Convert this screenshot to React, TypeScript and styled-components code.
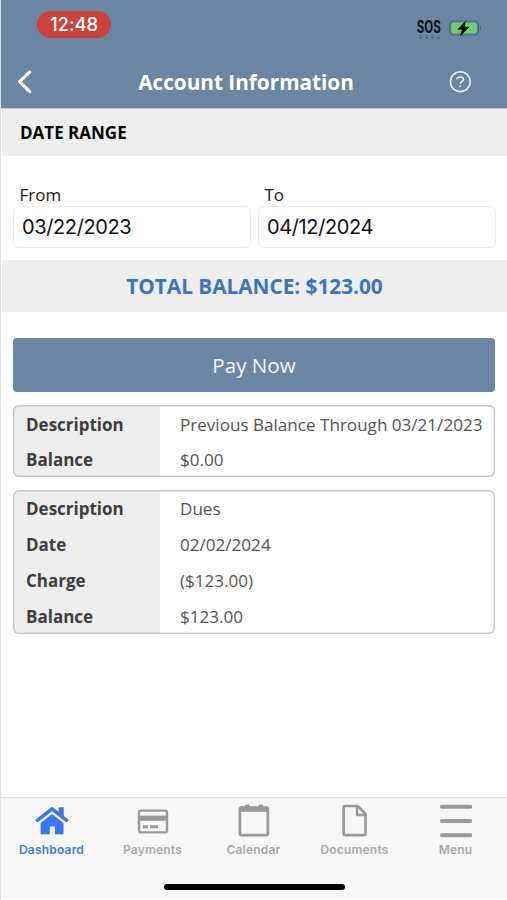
import React from "react";
import styled, { createGlobalStyle } from "styled-components";

const GlobalStyle = createGlobalStyle`
  * { box-sizing: border-box; }
  body { margin: 0; background: #fff; }
`;

const sans = `"Open Sans", "Noto Sans", sans-serif`;
const system = `Inter, "Liberation Sans", sans-serif`;

const Screen = styled.div`
  width: 507px;
  height: 900px;
  display: flex;
  flex-direction: column;
  overflow: hidden;
  background: #fff;
  font-family: ${sans};
  border-left: 1px solid #dfe4ea;
  white-space: nowrap;
`;

const Header = styled.header`
  height: 109px;
  flex: none;
  background: #6b86a2;
  border-bottom: 1px solid #c3cad2;
`;

const StatusBar = styled.div`
  height: 55px;
  display: flex;
  justify-content: space-between;
  padding: 11px 25px 0 36px;
`;

const Clock = styled.div`
  width: 74px;
  height: 27px;
  border-radius: 14px;
  background: #cb4238;
  color: #fff;
  font: 500 18.5px/27px ${system};
  letter-spacing: -0.1px;
  text-align: center;
`;

const Indicators = styled.div`
  display: flex;
  gap: 7px;
  padding-top: 8px;
`;

const Sos = styled.div`
  width: 24px;
  display: flex;
  flex-direction: column;
  align-items: center;
`;

const SosText = styled.span`
  font: 700 17px/17px ${system};
  color: #0b1016;
  transform: scaleX(0.68);
`;

const SignalDots = styled.div`
  display: flex;
  gap: 3px;
`;

const Dot = styled.i`
  width: 3px;
  height: 3px;
  border-radius: 50%;
  background: #536a82;
`;

const NavBar = styled.div`
  height: 53px;
  display: grid;
  grid-template-columns: 60px 1fr 60px;
  align-items: center;
  padding: 0 16px 0 15px;
`;

const NavButton = styled.button<{ $end?: boolean }>`
  display: flex;
  justify-content: ${(p) => (p.$end ? "flex-end" : "flex-start")};
  border: 0;
  padding: ${(p) => (p.$end ? "0 20px 0 0" : "0")};
  background: none;
`;

const Title = styled.h1`
  margin: 0;
  padding-right: 15px;
  color: #fff;
  text-align: center;
  font-size: 20.75px;
  line-height: 30px;
  font-weight: 700;
`;

const SectionTitle = styled.h2`
  flex: none;
  height: 47px;
  margin: 0 0 0 1px;
  padding-left: 18px;
  background: #eee;
  color: #080808;
  font-size: 17px;
  line-height: 47px;
  font-weight: 700;
`;

const DateRow = styled.div`
  flex: none;
  height: 103.5px;
  display: grid;
  grid-template-columns: 238px 238px;
  column-gap: 7px;
  padding: 27px 0 0 12px;
`;

const Field = styled.label`
  display: block;
`;

const FieldLabel = styled.span`
  display: block;
  padding-left: 6.5px;
  color: #222;
  font-size: 17px;
  line-height: 23px;
`;

const FieldValue = styled.span`
  display: block;
  height: 42px;
  padding-left: 8px;
  border: 1px solid #ececec;
  border-radius: 6px;
  color: #111;
  font: 400 20px/41px ${system};
  letter-spacing: -0.38px;
`;

const TotalBalance = styled.div`
  flex: none;
  height: 52.5px;
  margin-left: 1px;
  background: #eee;
  color: #3a74c9;
  text-align: center;
  font-size: 20.75px;
  line-height: 53px;
  font-weight: 700;
`;

const Content = styled.main`
  flex: 1;
  padding: 26px 12px 0;
  display: flex;
  flex-direction: column;
`;

const PayButton = styled.button`
  flex: none;
  height: 54px;
  margin-bottom: 13px;
  border: 0;
  border-radius: 4px;
  padding: 0;
  background: #6b86a2;
  color: #f6f9fc;
  font: 400 20.6px/55px ${sans};
`;

const Card = styled.dl`
  flex: none;
  margin: 0 0 12.4px;
  padding: 0.6px 0 0.2px;
  border-radius: 6px;
  overflow: hidden;
  background: linear-gradient(to right, #eee 147px, #fff 147px);
  box-shadow: inset 0 0 0 1.4px #c6c6c6;
`;

const CardRow = styled.div`
  height: 35.8px;
  display: grid;
  grid-template-columns: 167px 1fr;
  line-height: 37px;
`;

const Term = styled.dt`
  padding-left: 13px;
  color: #3d3d3d;
  font-size: 17px;
  font-weight: 700;
`;

const Detail = styled.dd`
  margin: 0;
  color: #555;
  font-size: 17.08px;
`;

const BottomBar = styled.footer`
  flex: none;
  height: 103px;
  border-top: 1px solid #dedede;
  border-bottom: 1px solid #fff;
  background: #f7f7f7;
`;

const Tabs = styled.nav`
  height: 86px;
  display: grid;
  grid-template-columns: repeat(5, 101px);
`;

const Tab = styled.a<{ $active?: boolean }>`
  display: flex;
  flex-direction: column;
  align-items: center;
  padding-top: 5px;
  color: ${(p) => (p.$active ? "#3478f6" : "#999")};
`;

const TabLabel = styled.span<{ $active?: boolean }>`
  margin-top: 3px;
  color: ${(p) => (p.$active ? "#3f7df0" : "#a9a9a9")};
  font: 600 12px/16px ${system};
  letter-spacing: 0.2px;
`;

const HomeIndicator = styled.div`
  width: 181px;
  height: 6px;
  margin-left: 162.5px;
  border-radius: 3px;
  background: #000;
`;

const Battery = () => (
  <svg width="34" height="20" viewBox="0 0 34 20">
    <rect x="1.5" y="2" width="29" height="14" rx="4" fill="none" stroke="#4d6175" strokeWidth="1.2" />
    <rect x="3.3" y="3.8" width="25.4" height="10.4" rx="2" fill="#6bd06d" />
    <path d="M32 7 Q34 9.2 32 11.5Z" fill="#4d6175" />
    <path d="M17.5 2.5 L10 10.2 H14.6 L12.5 16.5 L20.8 8.2 H16Z" fill="#05080a" stroke="#05080a" strokeWidth=".8" strokeLinejoin="round" />
  </svg>
);

const BackIcon = () => (
  <svg width="20" height="26" viewBox="0 0 20 26">
    <path d="M13.8 2.8 L3.5 12.7 L13.8 22.6" fill="none" stroke="#fff" strokeWidth="3.1" strokeLinecap="round" strokeLinejoin="round" />
  </svg>
);

const HelpIcon = () => (
  <svg width="22" height="22" viewBox="0 0 22 22" fill="none" stroke="#eef4fa">
    <circle cx="11.3" cy="10.7" r="9.9" strokeWidth="1.5" />
    <path d="M8 8.3 V7.4 Q8.8 6 11.3 6 Q14.5 6 14.5 8.3 Q14.5 9.7 12.9 10.5 Q11.3 11.3 11.3 12.8" strokeWidth="1.4" />
    <path d="M11.3 14.2 V15.7" strokeWidth="1.6" />
  </svg>
);

const HomeIcon = () => (
  <svg width="36" height="36" viewBox="0 0 36 36" fill="currentColor">
    <path d="M3.4 17.3 L18 5.8 L32.6 17.3" fill="none" stroke="currentColor" strokeWidth="3.5" strokeLinecap="round" strokeLinejoin="round" />
    <path d="M24.8 4.2 H29.7 V15.5 L24.8 11.5Z" />
    <path d="M18 11 L29.5 20 V30.6 Q29.5 31.2 29 31.2 H20.8 V23.4 H15.8 V31.2 H7.3 Q6.6 31.2 6.6 30.6 V20Z" />
  </svg>
);

const CardIcon = () => (
  <svg width="36" height="36" viewBox="0 0 36 36" fill="none" stroke="currentColor">
    <rect x="4" y="7.6" width="28" height="21.8" rx="1.8" strokeWidth="2.4" />
    <path d="M4 15.2 H32" strokeWidth="5.2" />
    <path d="M8 23.8 H13 M15 23.8 H23" strokeWidth="3" />
  </svg>
);

const CalendarIcon = () => (
  <svg width="36" height="36" viewBox="0 0 36 36" fill="none" stroke="currentColor">
    <rect x="3.9" y="4.6" width="28" height="27.6" rx="2" strokeWidth="2.7" />
    <path d="M4 6.2 H32" strokeWidth="5.2" />
    <path d="M9.5 4 V2 H13 V4 M23 4 V2 H26.5 V4" strokeWidth="1" fill="currentColor" />
  </svg>
);

const DocumentIcon = () => (
  <svg width="36" height="36" viewBox="0 0 36 36" fill="none" stroke="currentColor" strokeWidth="2.7" strokeLinejoin="round">
    <path d="M8 3 H20.5 L28.5 10.8 V30.5 Q28.5 32.1 27 32.1 H8.1 Q6.6 32.1 6.6 30.5 V4.5 Q6.6 3 8 3Z" />
    <path d="M20 3.2 V12 H28.3" strokeWidth="2.4" />
  </svg>
);

const MenuIcon = () => (
  <svg width="36" height="36" viewBox="0 0 36 36" fill="none" stroke="currentColor" strokeWidth="4" strokeLinecap="round">
    <path d="M4 3.8 H32.3 M4 18 H32.3 M4 32.2 H32.3" />
  </svg>
);

const tabs = [
  { label: "Dashboard", Icon: HomeIcon, active: true },
  { label: "Payments", Icon: CardIcon },
  { label: "Calendar", Icon: CalendarIcon },
  { label: "Documents", Icon: DocumentIcon },
  { label: "Menu", Icon: MenuIcon },
];

const entries = [
  [
    ["Description", "Previous Balance Through 03/21/2023"],
    ["Balance", "$0.00"],
  ],
  [
    ["Description", "Dues"],
    ["Date", "02/02/2024"],
    ["Charge", "($123.00)"],
    ["Balance", "$123.00"],
  ],
];

const dates = [
  ["From", "03/22/2023"],
  ["To", "04/12/2024"],
];

export default function App() {
  return (
    <>
      <GlobalStyle />
      <Screen>
        <Header>
          <StatusBar>
            <Clock>12:48</Clock>
            <Indicators>
              <Sos>
                <SosText>SOS</SosText>
                <SignalDots>
                  <Dot /><Dot /><Dot /><Dot />
                </SignalDots>
              </Sos>
              <Battery />
            </Indicators>
          </StatusBar>
          <NavBar>
            <NavButton aria-label="Back"><BackIcon /></NavButton>
            <Title>Account Information</Title>
            <NavButton $end aria-label="Help"><HelpIcon /></NavButton>
          </NavBar>
        </Header>
        <SectionTitle>DATE RANGE</SectionTitle>
        <DateRow>
          {dates.map(([label, value]) => (
            <Field key={label}>
              <FieldLabel>{label}</FieldLabel>
              <FieldValue>{value}</FieldValue>
            </Field>
          ))}
        </DateRow>
        <TotalBalance>TOTAL BALANCE: $123.00</TotalBalance>
        <Content>
          <PayButton>Pay Now</PayButton>
          {entries.map((rows, i) => (
            <Card key={i}>
              {rows.map(([term, detail]) => (
                <CardRow key={term}>
                  <Term>{term}</Term>
                  <Detail>{detail}</Detail>
                </CardRow>
              ))}
            </Card>
          ))}
        </Content>
        <BottomBar>
          <Tabs>
            {tabs.map(({ label, Icon, active }) => (
              <Tab key={label} $active={active}>
                <Icon />
                <TabLabel $active={active}>{label}</TabLabel>
              </Tab>
            ))}
          </Tabs>
          <HomeIndicator />
        </BottomBar>
      </Screen>
    </>
  );
}
